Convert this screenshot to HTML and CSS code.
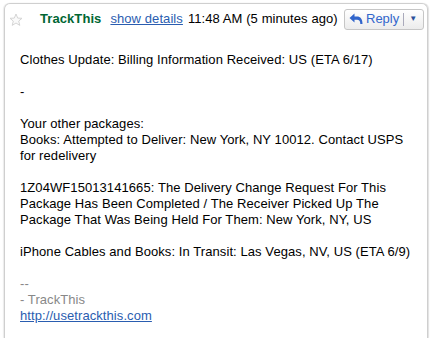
FILE: index.html
```html
<!DOCTYPE html>
<html>
<head>
<meta charset="utf-8">
<link rel="stylesheet" href="styles.css">
</head>
<body>
<div class="card">
  <div class="header">
    <svg class="star" width="14" height="14" viewBox="0 0 14 14"><path d="M7 1 L8.7 5.1 L13 5.3 L9.7 8.1 L10.8 12.4 L7 10 L3.2 12.4 L4.3 8.1 L1 5.3 L5.3 5.1 Z" fill="#fafafa" stroke="#d4d4d4" stroke-width="1"/></svg>
    <span class="sender">TrackThis</span>
    <a class="details" href="#">show details</a>
    <span class="time">11:48 AM (5 minutes ago)</span>
    <div class="reply">
      <span class="reply-main">
        <svg width="14" height="12" viewBox="0 0 14 12"><path d="M5.5 0.5 L0.5 5 L5.5 9.5 L5.5 6.8 L8 6.8 C10.2 6.8 11.3 8 11.3 11 L13.5 11 C13.5 6 11.5 3.4 8 3.4 L5.5 3.4 Z" fill="#3266cc"/></svg>
        Reply
      </span>
      <span class="sep"></span>
      <span class="more">▼</span>
    </div>
  </div>
  <div class="body">
    <p>Clothes Update: Billing Information Received: US (ETA 6/17)</p>
    <p>-</p>
    <p>Your other packages:<br>Books: Attempted to Deliver: New York, NY 10012. Contact USPS for redelivery</p>
    <p>1Z04WF15013141665: The Delivery Change Request For This Package Has Been Completed / The Receiver Picked Up The Package That Was Being Held For Them: New York, NY, US</p>
    <p>iPhone Cables and Books: In Transit: Las Vegas, NV, US (ETA 6/9)</p>
    <p class="sig">--<br>- TrackThis<br><a href="#">http://usetrackthis.com</a></p>
  </div>
</div>
</body>
</html>
```
FILE: styles.css
```css
html, body {
  margin: 0;
  padding: 0;
  background: #fff;
}
body {
  font-family: "Liberation Sans", Arial, sans-serif;
  font-size: 13px;
  line-height: 16px;
  color: #000;
  overflow: hidden;
  height: 338px;
}
.card {
  margin: 3px 4px 0 4px;
  border: 1px solid #cfcfcf;
  border-bottom: none;
  border-radius: 6px 6px 0 0;
  box-shadow: 1px 0 1px rgba(0,0,0,0.12), -1px 0 1px rgba(0,0,0,0.08);
  height: 335px;
  box-sizing: border-box;
  overflow: hidden;
}
.header {
  display: flex;
  align-items: center;
  height: 26px;
  padding: 2px 3px 0 4px;
  letter-spacing: 0.08px;
}
.star {
  display: block;
  margin-right: 17px;
  margin-top: 1px;
}
.sender {
  color: #006633;
  font-weight: bold;
  margin-right: 9px;
}
.details {
  color: #2a5db0;
  text-decoration: underline;
  margin-right: 5px;
}
.time {
  color: #000;
}
.reply {
  margin-left: auto;
  display: flex;
  align-items: center;
  height: 21px;
  width: 80px;
  border: 1px solid #c6c6c6;
  border-radius: 3px;
  background: linear-gradient(#ffffff, #ececec);
  color: #3266cc;
  box-sizing: border-box;
  letter-spacing: 0;
}
.reply-main {
  display: flex;
  align-items: center;
  gap: 3px;
  padding-left: 4px;
  font-size: 13px;
}
.reply-main svg {
  display: block;
}
.sep {
  width: 1px;
  height: 13px;
  background: #aab;
  margin-left: 4px;
}
.more {
  font-size: 8px;
  margin-left: 5px;
  color: #2a4f9a;
}
.body {
  padding: 20px 15px 0 15px;
  letter-spacing: 0.08px;
}
.body p {
  margin: 0 0 16px 0;
}
.sig {
  color: #888;
}
.sig a {
  color: #2a5db0;
  text-decoration: underline;
}
```
